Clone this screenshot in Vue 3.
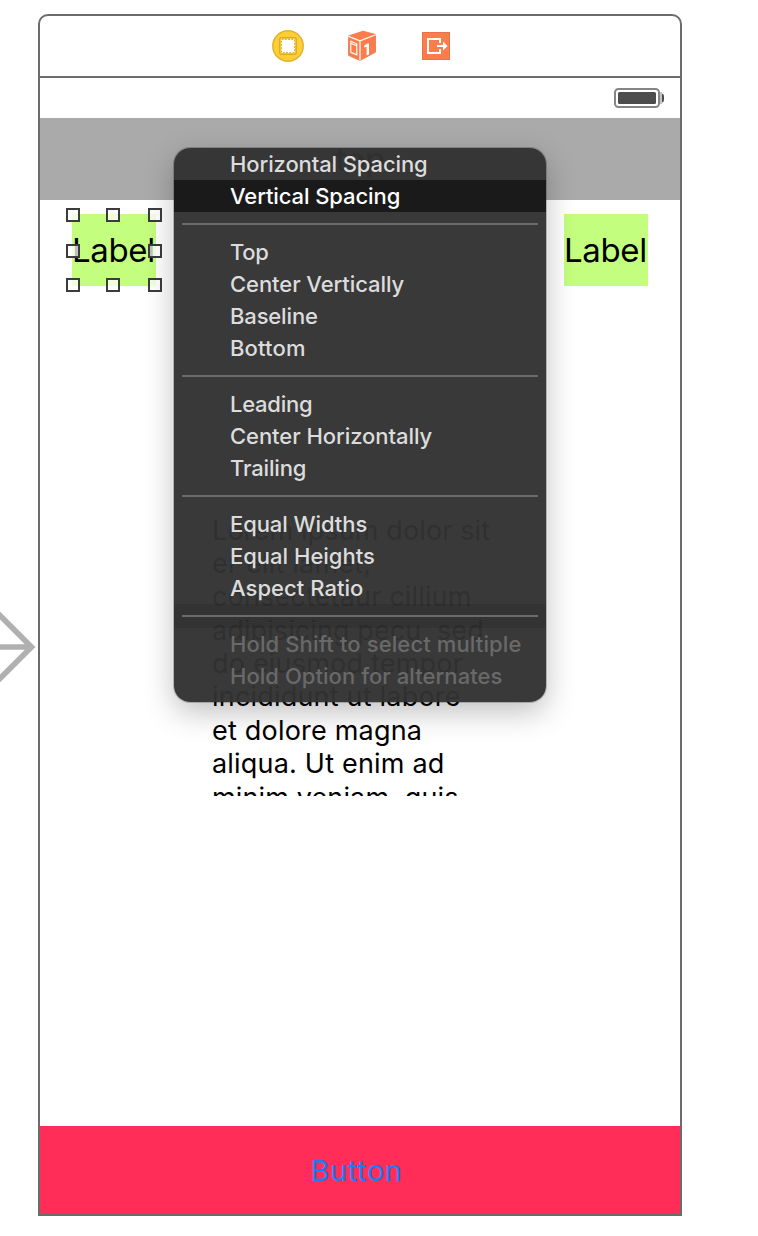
<script setup>
const groups = [
  [
    { text: 'Horizontal Spacing', ls: -0.11 },
    { text: 'Vertical Spacing', ls: -0.09, active: true },
  ],
  [
    { text: 'Top', ls: -0.3 },
    { text: 'Center Vertically', ls: -0.07 },
    { text: 'Baseline', ls: -0.15 },
    { text: 'Bottom', ls: 0.15 },
  ],
  [
    { text: 'Leading', ls: -0.25 },
    { text: 'Center Horizontally', ls: -0.06 },
    { text: 'Trailing', ls: -0.15 },
  ],
  [
    { text: 'Equal Widths', ls: -0.08 },
    { text: 'Equal Heights', ls: 0 },
    { text: 'Aspect Ratio', ls: 0.04 },
  ],
  [
    { text: 'Hold Shift to select multiple', ls: 0.12, hint: true },
    { text: 'Hold Option for alternates', ls: 0.05, hint: true },
  ],
]
const lines = [
  { text: 'Lorem ipsum dolor sit', ls: 0.13 },
  { text: 'er elit lamet,', ls: 0.2 },
  { text: 'consectetaur cillium', ls: 0.16 },
  { text: 'adipisicing pecu, sed', ls: 0.1 },
  { text: 'do eiusmod tempor', ls: 0.2 },
  { text: 'incididunt ut labore', ls: 0.2 },
  { text: 'et dolore magna', ls: 0.2 },
  { text: 'aliqua. Ut enim ad', ls: 0.2 },
  { text: 'minim veniam, quis', ls: 0.13 },
]
const handles = [0, 1, 2, 3, 4, 5, 6, 7, 8]
</script>

<template>
  <div class="canvas">
    <svg class="entry" width="38" height="70" viewBox="0 0 38 70">
      <path d="M-3 .5 L31.5 35 L-3 69.5 M-3 35 H32" fill="none" stroke="#b0b0b0" stroke-width="5.6" />
    </svg>

    <div class="device">
      <header class="dock">
        <svg width="32" height="32" viewBox="0 0 32 32">
          <circle cx="16" cy="16" r="15.2" fill="#fccf35" stroke="#e6b02e" stroke-width="1.5" />
          <rect x="7.7" y="7.7" width="16.6" height="16.6" rx="1" fill="#fccf35" stroke="#dda82c" stroke-width="1.2" />
          <rect x="9" y="9" width="14" height="14" fill="#fff" />
          <rect x="9.5" y="9.5" width="13" height="13" fill="none" stroke="#e3b23a" stroke-width="1" stroke-dasharray="2 1.25" />
        </svg>
        <svg width="28" height="32" viewBox="0 0 28 32">
          <path d="M15 1.2 L27.7 4.5 V22 L12 30.6 L.4 25.3 V6 Z" fill="#fc7d4c" stroke="#e8714a" stroke-width=".8" />
          <path d="M.4 6.4 L12 10.8 L27.7 4.8 M12 10.8 V30.6" fill="none" stroke="#fff" stroke-width="1.2" />
          <path d="M2.8 11.3 L8.8 13.8 V24.8 L2.8 22.3 Z M2.8 13.3 L8.8 15.8" fill="none" stroke="#fff" stroke-width="1.1" />
          <path d="M16.3 17.6 V15.4 L19.3 13.6 H21 V24.6 L18.6 25.6 V16.7 Z" fill="#fff" />
        </svg>
        <svg width="28" height="28" viewBox="0 0 28 28">
          <rect x=".5" y=".5" width="27" height="27" fill="#fc7d4c" stroke="#e8714a" />
          <path d="M18 11 V7 H6 V21 H18 V17" fill="none" stroke="#fff" stroke-width="2" />
          <path d="M15 14 H22" stroke="#fff" stroke-width="2" />
          <path d="M21 9.5 L25.5 14 L21 18.5 Z" fill="#fff" />
        </svg>
      </header>

      <div class="status">
        <svg width="50" height="20" viewBox="0 0 50 20">
          <rect x="1" y="1" width="44" height="18" rx="3.5" fill="#fff" stroke="#858585" stroke-width="2" />
          <rect x="4" y="4" width="38" height="12" rx="1.5" fill="#4d4d4d" />
          <path d="M46 4 H48 V16 H46 Z" fill="#c4c4c4" />
          <path d="M48 5.5 Q50 6 50 8 V12 Q50 14 48 14.5 Z" fill="#4d4d4d" />
        </svg>
      </div>

      <div class="nav">top</div>

      <main class="stage">
        <div class="labels">
          <div class="label">
            <span>Label</span>
            <div class="handles">
              <i v-for="h in handles" :key="h" :class="{ none: h === 4 }"></i>
            </div>
          </div>
          <div class="label"><span>Label</span></div>
        </div>
        <div class="copy">
          <div v-for="l in lines" :key="l.text" class="line">
            <span :style="{ letterSpacing: l.ls + 'px' }">{{ l.text }}</span>
          </div>
        </div>
      </main>

      <footer class="bar"><span>Button</span></footer>
    </div>

    <div class="menu">
      <template v-for="(g, i) in groups" :key="i">
        <div v-if="i" class="sep" :class="{ dim: i === 4 }"></div>
        <div v-for="m in g" :key="m.text" class="item" :class="{ active: m.active, hint: m.hint }">
          <span :style="{ letterSpacing: m.ls + 'px' }">{{ m.text }}</span>
        </div>
      </template>
    </div>
  </div>
</template>

<style>
body { background: #fff; }
</style>

<style scoped>
.canvas {
  position: relative;
  box-sizing: border-box;
  width: 758px;
  height: 1236px;
  padding: 14px 0 0 38px;
  overflow: hidden;
  font-family: Inter, "Liberation Sans", sans-serif;
}
.entry { position: absolute; left: 0; top: 612px; }
.device {
  box-sizing: border-box;
  width: 644px;
  height: 1202px;
  border: 2px solid #6d6b6d;
  border-radius: 10px 10px 0 0;
  display: flex;
  flex-direction: column;
}
.dock {
  height: 60px;
  flex: none;
  border-bottom: 2px solid #6d6b6d;
  display: flex;
  align-items: center;
  justify-content: center;
  gap: 45px;
  padding-left: 2px;
}
.dock svg:nth-child(1) { margin-right: -1px; }
.dock svg:nth-child(2) { margin-right: 1px; }
.status {
  height: 40px;
  flex: none;
  display: flex;
  align-items: center;
  justify-content: flex-end;
  padding-right: 16px;
}
.nav {
  height: 82px;
  flex: none;
  background: #aaa;
  text-align: center;
  font-size: 33px;
  line-height: 82px;
  font-weight: 500;
  letter-spacing: -.6px;
  color: #000;
}
.stage { flex: 1; min-height: 0; }
.labels {
  display: flex;
  justify-content: space-between;
  padding: 14px 32px 0;
}
.label {
  position: relative;
  box-sizing: border-box;
  width: 84px;
  height: 72px;
  background: #c3fe7e;
  font-size: 33px;
  line-height: 73px;
  letter-spacing: -.35px;
  white-space: nowrap;
}
.handles {
  position: absolute;
  left: -6px;
  top: -6px;
  display: grid;
  grid-template-columns: 14px 14px 14px;
  grid-template-rows: 14px 14px 14px;
  column-gap: 27px;
  row-gap: 21px;
}
.handles i {
  box-sizing: border-box;
  width: 14px;
  height: 14px;
  border: 2px solid #3c3c3c;
  background: rgba(255, 255, 255, .75);
}
.handles i:nth-child(3n + 2) { margin-left: -1px; }
.handles i:nth-child(4), .handles i:nth-child(6) { margin-top: 1px; }
.handles .none { visibility: hidden; }
.copy {
  box-sizing: border-box;
  margin: 226px 0 0 172px;
  padding-top: 1.5px;
  width: 296px;
  height: 284px;
  overflow: hidden;
}
.line {
  height: 33.4px;
  line-height: 33.4px;
  font-size: 27px;
  white-space: nowrap;
}
.bar {
  height: 88px;
  flex: none;
  background: #ff2d58;
  color: #147efb;
  font-size: 29px;
  line-height: 90px;
  letter-spacing: .6px;
  padding-right: 7px;
  text-align: center;
}
.menu {
  position: absolute;
  left: 174px;
  top: 148px;
  width: 372px;
  height: 554px;
  border-radius: 16px;
  overflow: hidden;
  background: rgba(50, 50, 50, .965);
  box-shadow: 0 0 0 1px rgba(0, 0, 0, .2), 0 10px 30px rgba(0, 0, 0, .25);
}
.item {
  height: 32px;
  padding-left: 56px;
  font-size: 22px;
  line-height: 33px;
  font-weight: 500;
  color: #dcdcdc;
  white-space: nowrap;
}
.item.active { background: #1a1a1a; color: #fff; }
.item.hint { color: #696969; }
.sep {
  height: 24px;
  box-sizing: border-box;
  padding: 11px 8px;
  background: #6b6b6b content-box;
}
.sep.dim { background: linear-gradient(#6b6b6b, #6b6b6b) content-box, rgba(0, 0, 0, .1); }
</style>
